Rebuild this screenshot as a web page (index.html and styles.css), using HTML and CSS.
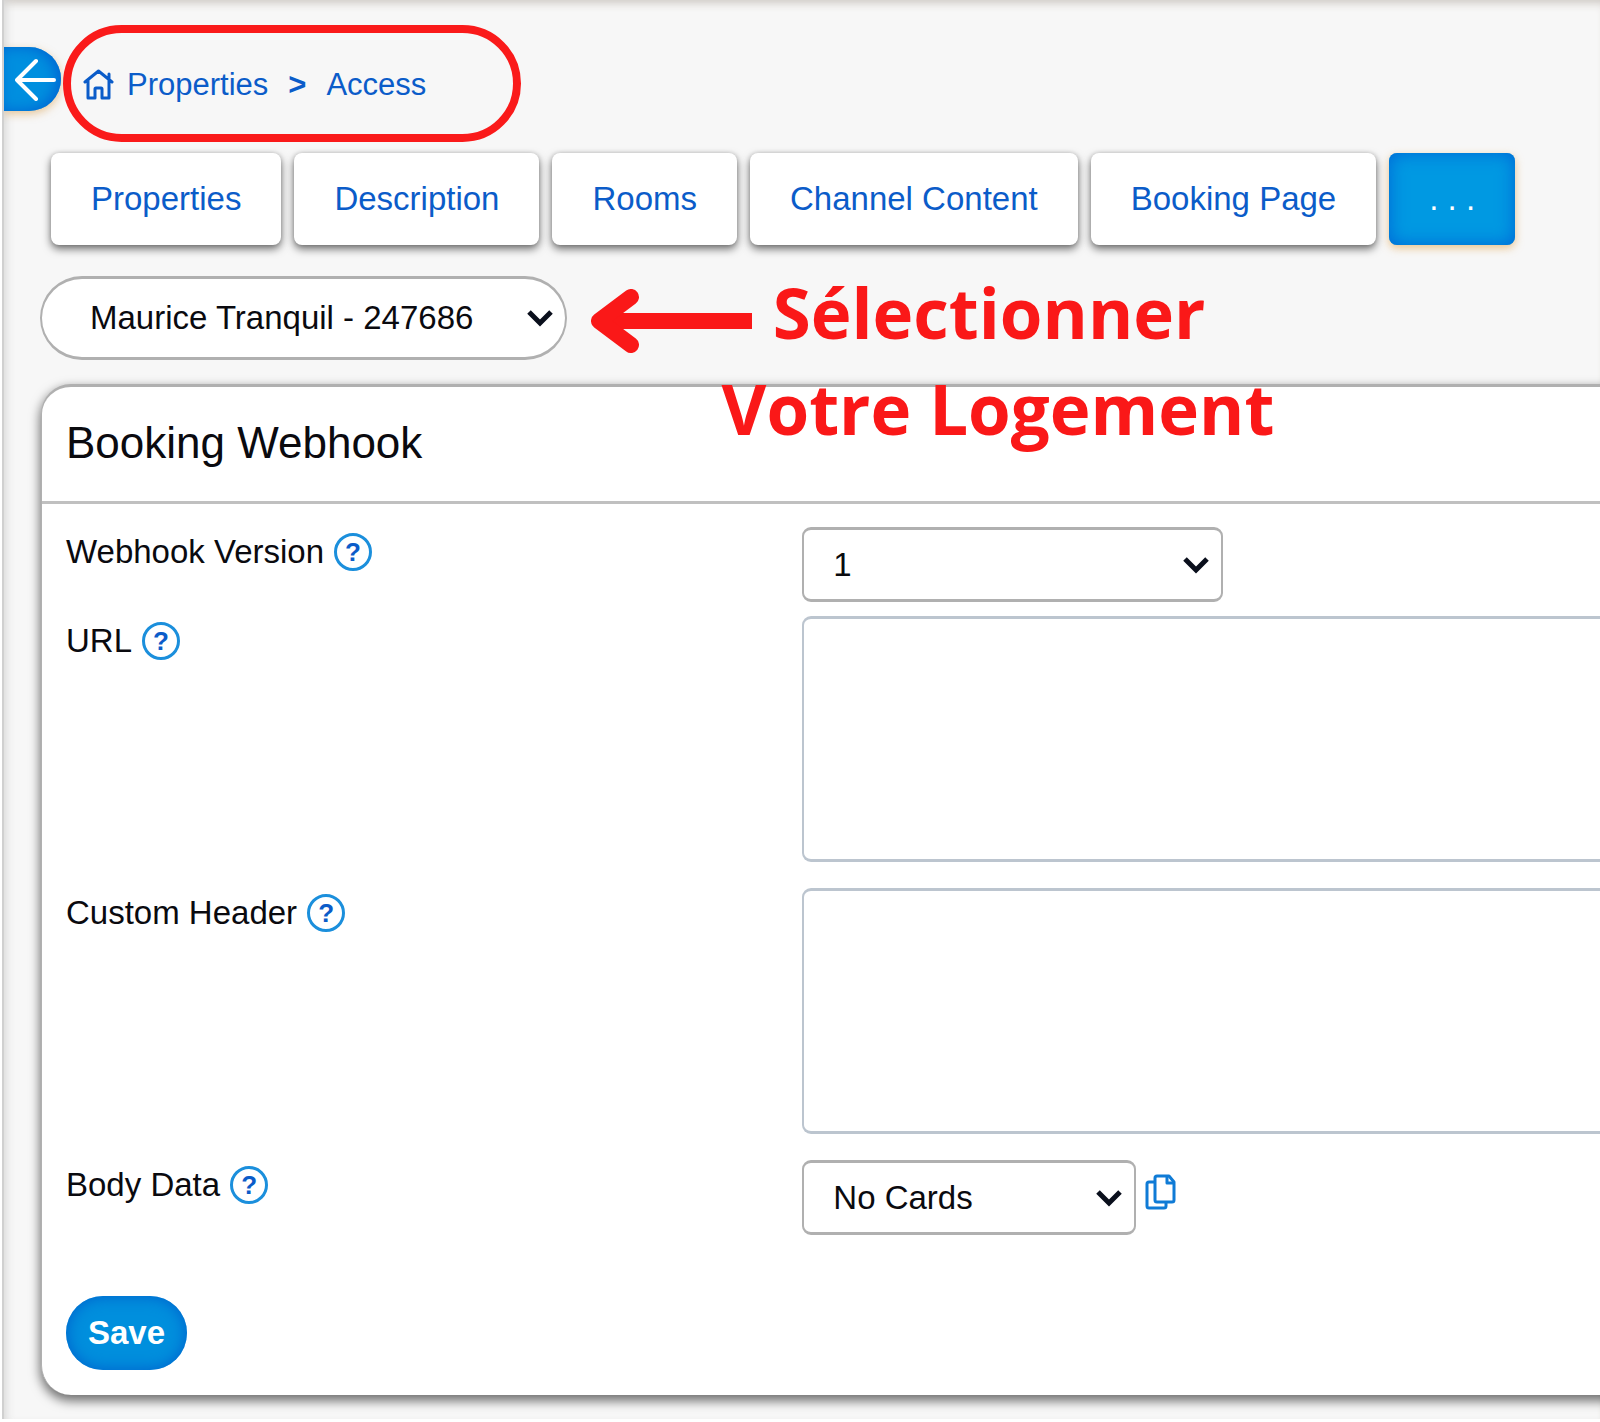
FILE: index.html
```html
<!DOCTYPE html>
<html lang="en">
<head>
<meta charset="utf-8">
<meta name="viewport" content="width=device-width, initial-scale=1">
<title>Properties - Access</title>
<link rel="stylesheet" href="styles.css">
</head>
<body>
<main class="page">
  <header class="topbar">
    <button class="back" type="button" aria-label="Back">
      <svg width="42" height="44" viewBox="0 0 42 44" fill="none" stroke="#fff" stroke-width="4" stroke-linecap="round" stroke-linejoin="round"><path d="M39 23H2M21 4 2 23l19 19"/></svg>
    </button>
    <nav class="breadcrumb" aria-label="Breadcrumb">
      <a class="crumb-home" href="#">
        <svg width="31" height="32" viewBox="0 0 31 32" fill="none" stroke="currentColor" stroke-width="3" stroke-linejoin="round" stroke-linecap="round"><path d="M2 13 15.500 2 29 13M5 11v18h7v-9q0-1 1-1h5q1 0 1 1v9h7V11M26 5v5"/></svg>
        <span>Properties</span>
      </a>
      <span class="crumb-sep">&gt;</span>
      <a href="#">Access</a>
      <span class="ring"></span>
    </nav>
  </header>

  <nav class="tabs" aria-label="Sections">
    <a class="tab" href="#">Properties</a>
    <a class="tab" href="#">Description</a>
    <a class="tab" href="#">Rooms</a>
    <a class="tab" href="#">Channel Content</a>
    <a class="tab" href="#">Booking Page</a>
    <a class="tab tab-active" href="#">. . .</a>
  </nav>

  <div class="picker">
    <div class="select select-property">
      <select aria-label="Property"><option>Maurice Tranquil - 247686</option></select>
      <svg class="chevron" width="28" height="18" viewBox="0 0 28 18"><path d="M3 3 14 14 25 3"/></svg>
    </div>
    <div class="callout">
      <svg class="callout-arrow" width="161" height="64" viewBox="0 0 161 64" fill="none" stroke="currentColor" stroke-width="16" stroke-linejoin="round"><path d="M161 32H8"/><path d="M40 8 8 32l32 24" stroke-linecap="round"/></svg>
      <p class="callout-text">Sélectionner&nbsp;<br>Votre Logement</p>
    </div>
  </div>

  <section class="card">
    <h1 class="card-title">Booking Webhook</h1>
    <form class="card-body">
      <div class="row">
        <div class="label"><label for="version">Webhook Version</label><button class="help" type="button" aria-label="Help for Webhook Version">?</button></div>
        <div class="select select-version">
          <select id="version"><option>1</option></select>
          <svg class="chevron" width="28" height="18" viewBox="0 0 28 18"><path d="M3 3 14 14 25 3"/></svg>
        </div>
      </div>
      <div class="row row-tall">
        <div class="label"><label for="url">URL</label><button class="help" type="button" aria-label="Help for URL">?</button></div>
        <textarea id="url"></textarea>
      </div>
      <div class="row row-tall">
        <div class="label"><label for="custom-header">Custom Header</label><button class="help" type="button" aria-label="Help for Custom Header">?</button></div>
        <textarea id="custom-header"></textarea>
      </div>
      <div class="row">
        <div class="label"><label for="body-data">Body Data</label><button class="help" type="button" aria-label="Help for Body Data">?</button></div>
        <div class="field-group">
          <div class="select select-data">
            <select id="body-data"><option>No Cards</option></select>
            <svg class="chevron" width="28" height="18" viewBox="0 0 28 18"><path d="M3 3 14 14 25 3"/></svg>
          </div>
          <button class="copy" type="button" aria-label="Copy">
            <svg width="31" height="36" viewBox="0 0 31 36" fill="none" stroke="currentColor" stroke-width="3" stroke-linejoin="round"><path d="M12 2h12l5 6v18q0 2-2 2H12q-2 0-2-2V4q0-2 2-2Z"/><path d="M22 2v7h7"/><path d="M10 8H4Q2 8 2 10v22q0 2 2 2h15q2 0 2-2v-4"/></svg>
          </button>
        </div>
      </div>
      <button class="save" type="submit">Save</button>
    </form>
  </section>
</main>
</body>
</html>
```
FILE: styles.css
```css
* { box-sizing: border-box; }

body {
  margin: 0;
  background: #fff;
  color: #0a0a0f;
  font: 33px/50px "Liberation Sans", Arial, sans-serif;
}

a { color: #0b5cc9; text-decoration: none; }

button, select, textarea { font: inherit; color: inherit; margin: 0; }

.page {
  margin: 0 0 4px 2px;
  padding-bottom: 24px;
  background: #f7f7f7;
  border-left: 2px solid #d0d0d0;
  box-shadow: inset 8px 0 10px -6px #d8d8d8, inset 0 9px 10px -6px #cdc8c2;
  overflow: hidden;
}

/* Back button and breadcrumb */
.topbar {
  display: flex;
  align-items: flex-start;
  gap: 22px;
  padding-top: 47px;
}

.back {
  display: flex;
  align-items: center;
  justify-content: flex-end;
  width: 57px;
  height: 64px;
  padding: 0 4px 0 0;
  border: 0;
  border-radius: 0 32px 32px 0;
  background: #008fdf;
  box-shadow: inset -4px 0 14px #0064d2, 0 3px 8px rgba(215, 150, 60, 0.5);
}

.breadcrumb {
  position: relative;
  display: flex;
  align-items: center;
  gap: 20px;
  font-size: 31px;
  line-height: 76px;
}

.crumb-home { display: flex; align-items: center; gap: 13px; }

.crumb-sep { color: #0b5cc9; font-weight: bold; }

.ring {
  position: absolute;
  top: -22px;
  left: -20px;
  width: 458px;
  height: 117px;
  border: 8px solid #fa1a1a;
  border-radius: 59px;
  pointer-events: none;
}

/* Tabs */
.tabs {
  display: flex;
  gap: 13px;
  margin: 30px 0 0 47px;
}

.tab {
  flex: none;
  padding: 21px 40px;
  border-radius: 8px;
  background: #fff;
  box-shadow: 0 4px 8px rgba(0, 0, 0, 0.55), 0 0 4px rgba(0, 0, 0, 0.15);
}

.tab-active {
  color: #fff;
  background: #0099e2;
  box-shadow: inset 0 0 18px #0066d6, 0 3px 8px rgba(225, 160, 70, 0.6);
}

/* Drop-downs */
.select { position: relative; }

.select select {
  display: block;
  width: 100%;
  height: 75px;
  padding: 0 50px 0 29px;
  appearance: none;
  border: solid #b0b0b0;
  border-width: 3px 2px;
  border-radius: 9px;
  background: #fff;
}

.chevron {
  position: absolute;
  top: 50%;
  right: 13px;
  margin-top: -9px;
  fill: none;
  stroke: #0a0f1c;
  stroke-width: 5px;
  pointer-events: none;
}

.picker {
  position: relative;
  margin: 31px 0 0 36px;
}

.select-property { width: 527px; }

.select-property select {
  height: 84px;
  padding-left: 48px;
  border-radius: 42px;
}

.select-version { width: 421px; }
.select-data { width: 334px; }

.callout {
  position: absolute;
  top: -18px;
  left: 551px;
  display: flex;
  align-items: flex-start;
  color: #fa1818;
}

.callout-arrow { margin-top: 31px; }

.callout-text {
  width: 556px;
  margin: 6px 0 0 -32px;
  font: bold 69px/96px "Open Sans", sans-serif;
  text-align: center;
  white-space: nowrap;
}

/* Card */
.card {
  margin: 24px -20px 0 37px;
  border: solid #b0b0b0;
  border-width: 3px 0 0 1px;
  border-radius: 30px 0 0 30px;
  background: #fff;
  box-shadow: 0 5px 11px 1px rgba(0, 0, 0, 0.55);
}

.card-title {
  margin: 0;
  padding: 31px 24px 33px;
  border-bottom: 3px solid #c0c0c0;
  font-size: 44px;
  font-weight: normal;
}

.card-body { padding: 23px 20px 25px 24px; }

.row {
  display: grid;
  grid-template-columns: 48% 1fr;
  align-items: start;
  margin-bottom: 14px;
}

.row-tall { margin-bottom: 26px; }

.label { display: flex; align-items: center; gap: 10px; }

.help {
  width: 38px;
  height: 38px;
  padding: 0;
  border: 3px solid #1b8fdc;
  border-radius: 50%;
  background: none;
  color: #0b5cc9;
  font-size: 26px;
  font-weight: bold;
  line-height: 32px;
}

textarea {
  display: block;
  width: 100%;
  height: 246px;
  padding: 12px 29px;
  border: solid #bcc5cf;
  border-width: 3px 0 3px 2px;
  border-radius: 9px 0 0 9px;
  background: #fff;
  resize: none;
}

.field-group { display: flex; align-items: flex-start; gap: 9px; }

.copy {
  display: flex;
  padding: 14px 0 0;
  border: 0;
  background: none;
  color: #0f7bd6;
}

.save {
  display: block;
  height: 74px;
  margin-top: 61px;
  padding: 0 22px;
  border: 0;
  border-radius: 37px;
  background: #008fdd;
  box-shadow: inset 0 0 16px #005fcb;
  color: #fff;
  font-weight: bold;
}
```
